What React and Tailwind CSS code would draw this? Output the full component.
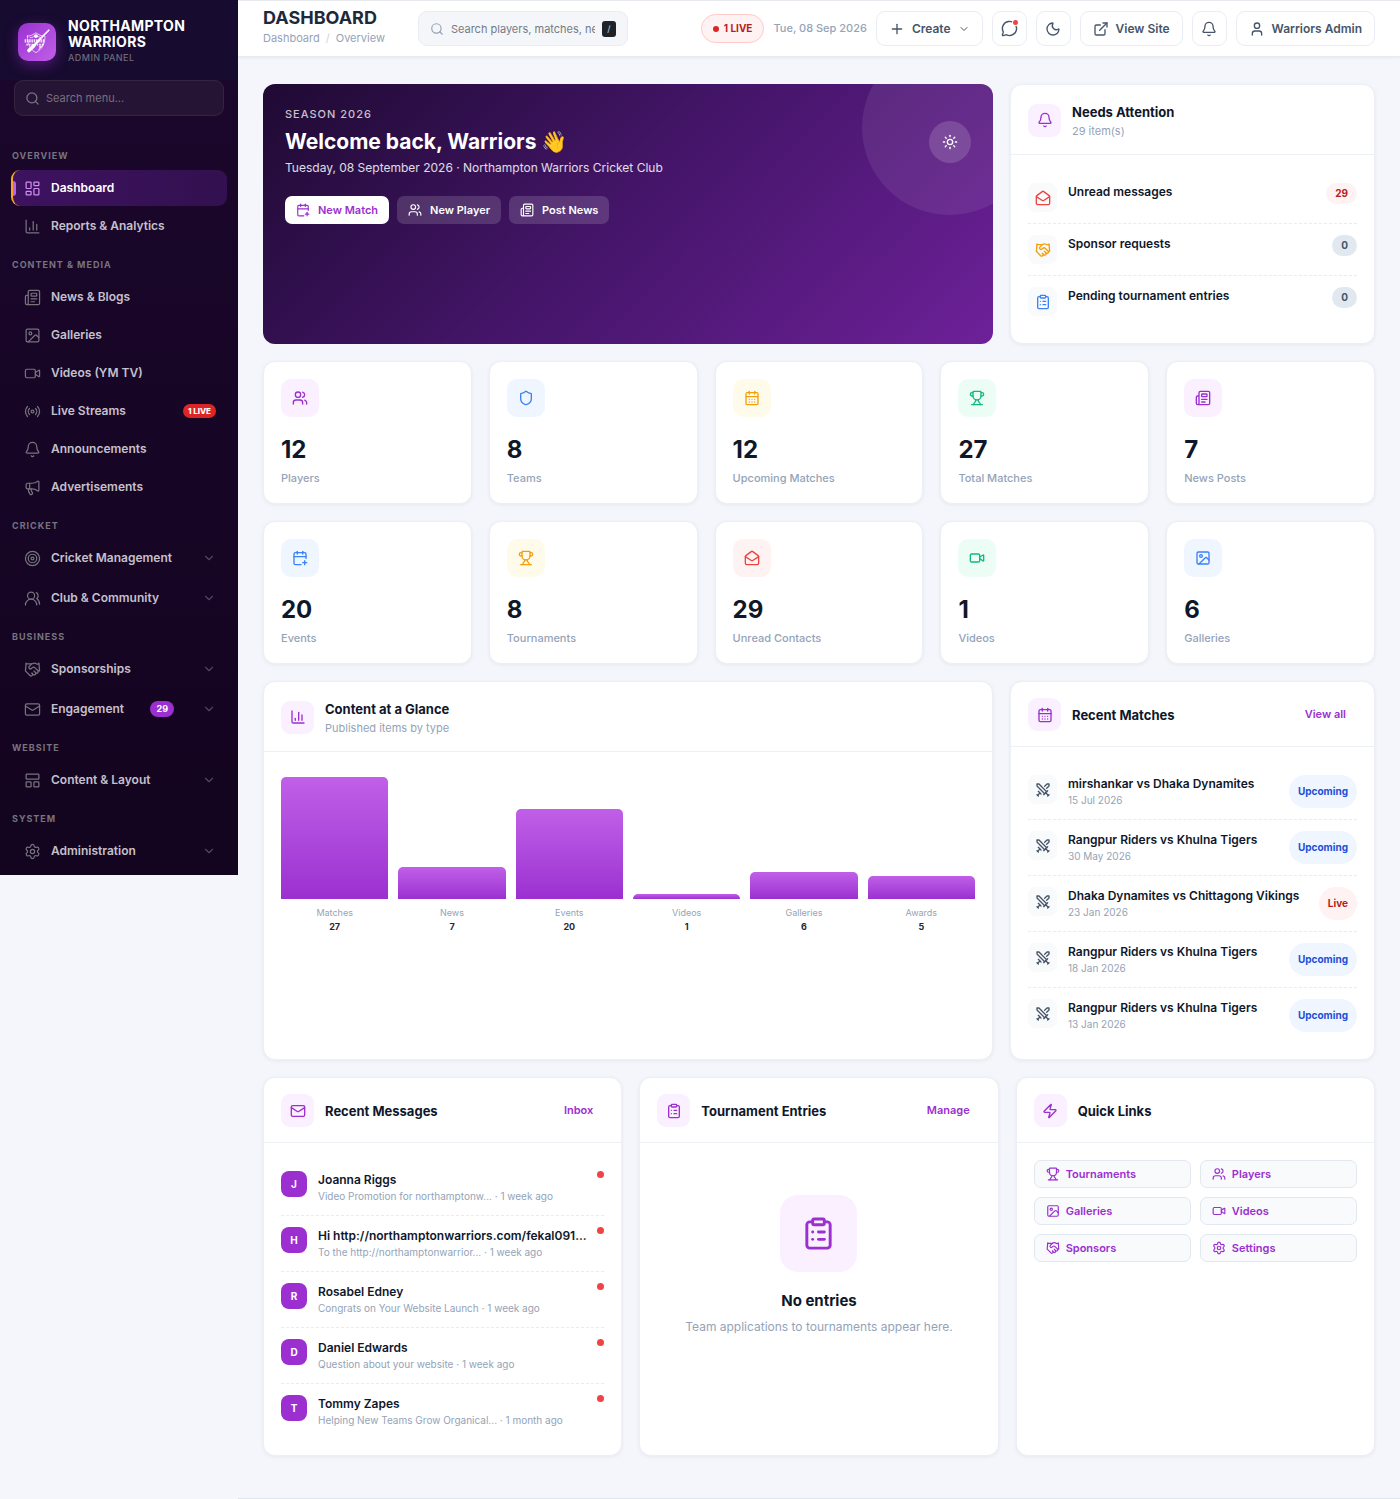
import {
  Bell,
  CalendarDays,
  CalendarPlus,
  ChartColumn,
  ChevronDown,
  ClipboardList,
  ExternalLink,
  Handshake,
  Image,
  LayoutDashboard,
  LayoutPanelTop,
  Mail,
  MailOpen,
  Megaphone,
  MessageCircle,
  Moon,
  Newspaper,
  Plus,
  Radio,
  Search,
  Settings,
  Shield,
  Sun,
  Swords,
  Target,
  Trophy,
  User,
  Users,
  UsersRound,
  Video,
  Zap,
} from 'lucide-react'

const menu = [
  {
    title: 'Overview',
    items: [
      { label: 'Dashboard', icon: LayoutDashboard, active: true },
      { label: 'Reports & Analytics', icon: ChartColumn },
    ],
  },
  {
    title: 'Content & Media',
    items: [
      { label: 'News & Blogs', icon: Newspaper },
      { label: 'Galleries', icon: Image },
      { label: 'Videos (YM TV)', icon: Video },
      { label: 'Live Streams', icon: Radio, live: '1 LIVE' },
      { label: 'Announcements', icon: Bell },
      { label: 'Advertisements', icon: Megaphone },
    ],
  },
  {
    title: 'Cricket',
    groups: [
      { label: 'Cricket Management', icon: Target },
      { label: 'Club & Community', icon: UsersRound },
    ],
  },
  {
    title: 'Business',
    groups: [
      { label: 'Sponsorships', icon: Handshake },
      { label: 'Engagement', icon: Mail, count: 29 },
    ],
  },
  { title: 'Website', groups: [{ label: 'Content & Layout', icon: LayoutPanelTop }] },
  { title: 'System', groups: [{ label: 'Administration', icon: Settings }] },
]

const tones = {
  purple: 'bg-[#faf0ff] text-[#9b2fd0]',
  blue: 'bg-[#eff6ff] text-[#3b82f6]',
  amber: 'bg-[#fffbeb] text-[#f59e0b]',
  green: 'bg-[#ecfdf5] text-[#10b981]',
  red: 'bg-[#fef2f2] text-[#ef4444]',
}

const stats = [
  { value: 12, label: 'Players', icon: Users, tone: 'purple' },
  { value: 8, label: 'Teams', icon: Shield, tone: 'blue' },
  { value: 12, label: 'Upcoming Matches', icon: CalendarDays, tone: 'amber' },
  { value: 27, label: 'Total Matches', icon: Trophy, tone: 'green' },
  { value: 7, label: 'News Posts', icon: Newspaper, tone: 'purple' },
  { value: 20, label: 'Events', icon: CalendarPlus, tone: 'blue' },
  { value: 8, label: 'Tournaments', icon: Trophy, tone: 'amber' },
  { value: 29, label: 'Unread Contacts', icon: MailOpen, tone: 'red' },
  { value: 1, label: 'Videos', icon: Video, tone: 'green' },
  { value: 6, label: 'Galleries', icon: Image, tone: 'blue' },
]

const attention = [
  { label: 'Unread messages', count: 29, icon: MailOpen, color: 'text-[#ef4444]', badge: 'bg-[#fef2f2] text-[#b91c1c]' },
  { label: 'Sponsor requests', count: 0, icon: Handshake, color: 'text-[#f59e0b]', badge: 'bg-[#e2e8f0] text-[#475569]' },
  { label: 'Pending tournament entries', count: 0, icon: ClipboardList, color: 'text-[#3b82f6]', badge: 'bg-[#e2e8f0] text-[#475569]' },
]

const published = [
  { label: 'Matches', value: 27 },
  { label: 'News', value: 7 },
  { label: 'Events', value: 20 },
  { label: 'Videos', value: 1 },
  { label: 'Galleries', value: 6 },
  { label: 'Awards', value: 5 },
]

const matches = [
  { title: 'mirshankar vs Dhaka Dynamites', date: '15 Jul 2026', status: 'Upcoming' },
  { title: 'Rangpur Riders vs Khulna Tigers', date: '30 May 2026', status: 'Upcoming' },
  { title: 'Dhaka Dynamites vs Chittagong Vikings', date: '23 Jan 2026', status: 'Live' },
  { title: 'Rangpur Riders vs Khulna Tigers', date: '18 Jan 2026', status: 'Upcoming' },
  { title: 'Rangpur Riders vs Khulna Tigers', date: '13 Jan 2026', status: 'Upcoming' },
]

const messages = [
  { name: 'Joanna Riggs', text: 'Video Promotion for northamptonw... · 1 week ago' },
  { name: 'Hi http://northamptonwarriors.com/fekal091...', text: 'To the http://northamptonwarrior... · 1 week ago' },
  { name: 'Rosabel Edney', text: 'Congrats on Your Website Launch · 1 week ago' },
  { name: 'Daniel Edwards', text: 'Question about your website · 1 week ago' },
  { name: 'Tommy Zapes', text: 'Helping New Teams Grow Organical... · 1 month ago' },
]

const quickLinks = [
  { label: 'Tournaments', icon: Trophy },
  { label: 'Players', icon: Users },
  { label: 'Galleries', icon: Image },
  { label: 'Videos', icon: Video },
  { label: 'Sponsors', icon: Handshake },
  { label: 'Settings', icon: Settings },
]

function ClubLogo() {
  return (
    <svg viewBox="0 0 28 28" className="h-[30px] w-[30px]" fill="none" stroke="white" strokeLinecap="round" strokeLinejoin="round">
      <path d="M5 8.5c3 0 5.5-1.2 8-3.2 2.5 2 5 3.2 8.5 3.2-.2 7.5-2.5 12-8.5 15.5C7.5 21 5.2 16 5 8.5Z" strokeWidth="0.8" opacity="0.8" />
      <path d="M7.5 10c2.2-.2 4-1 5.7-2.2 1.8 1.2 3.5 2 5.8 2.2" strokeWidth="0.9" opacity="0.8" />
      <circle cx="13" cy="8.5" r="1.8" fill="white" stroke="none" />
      <path d="M2.5 13h19" strokeWidth="3" strokeDasharray="1.4 0.7" strokeLinecap="butt" opacity="0.85" />
      <path d="M4 16.5h16" strokeWidth="1.6" strokeDasharray="1.6 0.8" strokeLinecap="butt" opacity="0.8" />
      <path d="M15.5 21c2.2-1.7 3.7-3.7 4.5-6" strokeWidth="0.9" opacity="0.8" />
      <path d="M25 3 17 11" strokeWidth="1.5" />
      <path d="M17 11 11.5 17" strokeWidth="2" />
      <path d="m11 17.5-4.5 4.5" strokeWidth="3.4" />
      <circle cx="17" cy="18.5" r="1.3" fill="white" stroke="none" opacity="0.7" />
    </svg>
  )
}

function MenuItem({ item }) {
  const Icon = item.icon
  return (
    <a
      href="#"
      className={
        item.active
          ? 'relative flex h-9 items-center gap-[10px] rounded-[9px] border-l-2 border-[#f5a623] bg-linear-to-r from-[#3d1260] to-[#33104f] pr-[11px] pl-[11px] text-white'
          : 'flex h-9 items-center gap-[10px] rounded-[9px] pr-[11px] pl-[13px] text-[#c5c0cc]'
      }
    >
      {item.active && <span className="absolute top-[11px] left-0 h-[15px] w-[3px] rounded-r-[3px] bg-[#c05fe8]" />}
      <Icon size={17} strokeWidth={1.75} className={item.active ? 'text-[#cf8df0]' : 'text-[#77737f]'} />
      <span className="text-xs font-semibold">{item.label}</span>
      {item.live && (
        <span className="ml-auto rounded-full bg-[#dc2626] px-[5px] text-[8px] leading-[14px] font-extrabold text-white">{item.live}</span>
      )}
    </a>
  )
}

function MenuGroup({ item }) {
  const Icon = item.icon
  return (
    <button type="button" className="flex h-9 w-full items-center gap-[10px] rounded-[9px] pr-[11px] pl-[13px] text-[#c5c0cc]">
      <Icon size={17} strokeWidth={1.75} className="text-[#77737f]" />
      <span className="text-xs font-semibold">{item.label}</span>
      {item.count && (
        <span className="ml-auto rounded-full bg-[#9b2fd0] px-[6px] text-[9px] leading-4 font-bold text-white">{item.count}</span>
      )}
      <ChevronDown size={14} className={item.count ? 'ml-[18px] text-[#4f495a]' : 'ml-auto text-[#4f495a]'} />
    </button>
  )
}

function Sidebar() {
  return (
    <aside className="w-[238px] shrink-0 self-start bg-linear-to-b from-[#1b072c] to-[#13041f] pb-[6px]">
      <div className="flex h-20 items-center gap-3 bg-[#170b2f] pt-1 pl-[18px]">
        <div className="flex h-[38px] w-[38px] items-center justify-center rounded-[10px] bg-linear-to-br from-[#9b2fd0] to-[#c05fe8] shadow-[0_4px_14px_rgba(155,47,208,0.45)]">
          <ClubLogo />
        </div>
        <div className="pb-[2px]">
          <div className="text-sm leading-4 font-bold tracking-wide text-white">
            NORTHAMPTON
            <br />
            WARRIORS
          </div>
          <div className="mt-[2px] text-[9px] leading-3 font-medium tracking-wider text-[#6f6a7c]">ADMIN PANEL</div>
        </div>
      </div>

      <div className="mx-[14px] flex h-9 items-center gap-[6px] rounded-[9px] border border-[#34243f] bg-[#261435] pl-[10px]">
        <Search size={15} className="shrink-0 text-[#7c7685]" />
        <input
          type="text"
          aria-label="Search menu"
          placeholder="Search menu..."
          className="h-full min-w-0 flex-1 bg-transparent text-[11px] text-white outline-none placeholder:text-[#77717f]"
        />
      </div>

      <nav className="mt-[19px] px-[11px]">
        {menu.map((section) => (
          <div key={section.title}>
            <h2 className="pt-[15px] pb-2 pl-px text-[9px] leading-3 font-bold tracking-[1px] text-[#77737f] uppercase">{section.title}</h2>
            {section.items && (
              <div className="flex flex-col gap-[2px]">
                {section.items.map((item) => (
                  <MenuItem key={item.label} item={item} />
                ))}
              </div>
            )}
            {section.groups && (
              <div className="flex flex-col gap-1">
                {section.groups.map((item) => (
                  <MenuGroup key={item.label} item={item} />
                ))}
              </div>
            )}
          </div>
        ))}
      </nav>
    </aside>
  )
}

function TopBar() {
  const button = 'flex h-[35px] items-center rounded-[9px] border border-[#e9edf3] bg-white text-xs font-semibold text-[#475569]'
  return (
    <header className="flex h-[57px] items-center border-t border-b border-t-[#e8e9ee] border-b-[#e8ebf1] bg-white px-[25px] shadow-[0_1px_3px_rgba(15,23,42,0.06)]">
      <div className="pb-[2px]">
        <h1 className="text-lg leading-5 font-bold text-[#1e293b]">DASHBOARD</h1>
        <nav className="flex gap-[6px] text-[11px] leading-5 text-[#94a3b8]">
          <a href="#">Dashboard</a>
          <span className="text-[#cbd5e1]">/</span>
          <span>Overview</span>
        </nav>
      </div>
      <div className="ml-[33px] flex h-[35px] w-[210px] items-center gap-[7px] rounded-[9px] border border-[#e9edf3] bg-[#f4f6f9] px-[11px]">
        <Search size={14} className="shrink-0 text-[#94a3b8]" />
        <input
          type="text"
          aria-label="Search players, matches, news"
          placeholder="Search players, matches, news"
          className="h-full min-w-0 flex-1 bg-transparent text-[11px] text-[#1e293b] outline-none placeholder:text-[#757b85]"
        />
        <kbd className="h-4 w-[14px] rounded-[3px] bg-[#1e2329] text-center font-[Inter] text-[9px] leading-4 text-[#cbd5e1]">/</kbd>
      </div>

      <div className="ml-auto flex items-center gap-[9px]">
        <a href="#" className="flex h-[29px] items-center gap-[5px] rounded-full border border-[#fecaca] bg-[#fef2f2] px-[11px] text-[10px] font-bold text-[#b91c1c]">
          <span className="h-[6px] w-[6px] rounded-full bg-[#dc2626]" />1 LIVE
        </a>
        <span className="text-[11px] font-medium text-[#94a3b8]">Tue, 08 Sep 2026</span>
        <button type="button" className={`${button} gap-[7px] px-3`}>
          <Plus size={16} />
          Create
          <ChevronDown size={12} />
        </button>
        <button type="button" aria-label="Messages" className={`${button} relative w-[35px] justify-center`}>
          <MessageCircle size={17} />
          <span className="absolute top-[8px] right-[8px] h-[5px] w-[5px] rounded-full bg-[#ef4444] ring-1 ring-white" />
        </button>
        <button type="button" aria-label="Dark mode" className={`${button} w-[35px] justify-center`}>
          <Moon size={16} />
        </button>
        <a href="#" className={`${button} gap-[7px] px-3`}>
          <ExternalLink size={16} />
          View Site
        </a>
        <button type="button" aria-label="Notifications" className={`${button} w-[35px] justify-center`}>
          <Bell size={16} />
        </button>
        <button type="button" className={`${button} gap-[7px] px-3`}>
          <User size={16} />
          Warriors Admin
        </button>
      </div>
    </header>
  )
}

function Hero() {
  const action = 'flex h-7 items-center gap-2 rounded-[7px] px-[11px] text-[11px] font-semibold'
  return (
    <section className="relative overflow-hidden rounded-xl bg-linear-135 from-[#1f0a33] via-[#45156a] to-[#6e2199] px-[22px] pt-[22px]">
      <div className="absolute -top-11 -right-11 h-[175px] w-[175px] rounded-full bg-white/8" />
      <div className="relative flex justify-between">
        <div>
          <p className="text-[11px] leading-4 font-medium tracking-[1px] text-white/75">SEASON 2026</p>
          <h2 className="mt-[6px] text-[21px] leading-7 font-bold text-white">Welcome back, Warriors 👋</h2>
          <p className="mt-[3px] text-xs leading-[18px] text-white/85">Tuesday, 08 September 2026 · Northampton Warriors Cricket Club</p>
        </div>
        <div className="mt-[15px] flex h-[42px] w-[42px] items-center justify-center rounded-full bg-white/15 text-white">
          <Sun size={16} />
        </div>
      </div>
      <div className="relative mt-[19px] flex gap-2">
        <button type="button" className={`${action} bg-white text-[#9b2fd0]`}>
          <CalendarPlus size={14} />
          New Match
        </button>
        <button type="button" className={`${action} bg-white/15 text-white`}>
          <Users size={14} />
          New Player
        </button>
        <button type="button" className={`${action} bg-white/15 text-white`}>
          <Newspaper size={14} />
          Post News
        </button>
      </div>
    </section>
  )
}

function Card({ title, subtitle, icon: Icon, action, children }) {
  return (
    <section className="rounded-xl border border-[#eceff5] bg-white shadow-[0_1px_4px_rgba(15,23,42,0.06)]">
      <div className="flex items-center gap-[11px] border-b border-[#edf0f5] px-[17px] pt-4 pb-[15px]">
        <div className={`flex h-[33px] w-[33px] shrink-0 items-center justify-center rounded-[9px] ${tones.purple}`}>
          <Icon size={16} />
        </div>
        <div>
          <h3 className="text-[13px] leading-[22px] font-bold text-[#0f172a]">{title}</h3>
          {subtitle && <p className="text-[11px] leading-4 text-[#94a3b8]">{subtitle}</p>}
        </div>
        {action && (
          <a href="#" className="ml-auto px-[11px] text-[11px] font-semibold text-[#9b2fd0]">
            {action}
          </a>
        )}
      </div>
      <div className="px-[17px] pt-[17px] pb-4">{children}</div>
    </section>
  )
}

function StatCard({ stat }) {
  const Icon = stat.icon
  return (
    <a href="#" className="block rounded-xl border border-[#eceff5] bg-white p-[17px] shadow-[0_1px_4px_rgba(15,23,42,0.06)]">
      <div className={`flex h-[38px] w-[38px] items-center justify-center rounded-[10px] ${tones[stat.tone]}`}>
        <Icon size={16} />
      </div>
      <div className="mt-[18px] text-2xl leading-[30px] font-bold text-[#0f172a]">{stat.value}</div>
      <div className="mt-[5px] text-[11px] leading-4 font-medium text-[#94a3b8]">{stat.label}</div>
    </a>
  )
}

const row = 'flex gap-[11px] border-b border-dashed border-[#e8ebf1] py-[11px] last:border-b-0'

function PublishedChart() {
  const max = Math.max(...published.map((p) => p.value))
  return (
    <div className="mt-2 grid grid-cols-6 gap-[10px]">
      {published.map((p) => (
        <div key={p.label} className="text-center">
          <div className="flex h-[122px] items-end">
            <div
              className="w-full rounded-t-[5px] bg-linear-to-b from-[#c05fe8] to-[#9b2fd0]"
              style={{ height: `${(p.value / max) * 100}%` }}
            />
          </div>
          <div className="mt-[7px] text-[9px] leading-[14px] text-[#94a3b8]">{p.label}</div>
          <div className="text-[9px] leading-[14px] font-bold text-[#1e293b]">{p.value}</div>
        </div>
      ))}
    </div>
  )
}

export default function App() {
  return (
    <div className="flex bg-[#f5f6fb] font-[Inter,sans-serif]">
      <Sidebar />
      <div className="min-w-0 flex-1">
        <TopBar />
        <main className="flex flex-col gap-[17px] px-[25px] pt-[27px] pb-[42px]">
          <div className="grid grid-cols-[2fr_1fr] gap-[17px]">
            <Hero />
            <Card title="Needs Attention" subtitle="29 item(s)" icon={Bell}>
              {attention.map((item) => {
                const Icon = item.icon
                return (
                  <div key={item.label} className={row}>
                    <div className={`flex h-[29px] w-[29px] items-center justify-center rounded-lg bg-[#f8fafc] ${item.color}`}>
                      <Icon size={16} />
                    </div>
                    <a href="#" className="text-xs leading-[18px] font-semibold text-[#0f172a]">
                      {item.label}
                    </a>
                    <span className={`ml-auto self-start rounded-full px-[9px] text-[10px] leading-[21px] font-bold ${item.badge}`}>{item.count}</span>
                  </div>
                )
              })}
            </Card>
          </div>

          <div className="grid grid-cols-5 gap-[17px]">
            {stats.map((stat) => (
              <StatCard key={stat.label} stat={stat} />
            ))}
          </div>

          <div className="grid grid-cols-[2fr_1fr] gap-[17px]">
            <Card title="Content at a Glance" subtitle="Published items by type" icon={ChartColumn}>
              <PublishedChart />
            </Card>
            <Card title="Recent Matches" icon={CalendarDays} action="View all">
              {matches.map((match) => (
                <div key={match.date} className={row}>
                  <div className="flex h-[29px] w-[29px] items-center justify-center rounded-lg bg-[#f8fafc] text-[#475569]">
                    <Swords size={16} />
                  </div>
                  <div>
                    <a href="#" className="block text-xs leading-[18px] font-semibold text-[#0f172a]">
                      {match.title}
                    </a>
                    <p className="text-[10px] leading-[15px] text-[#94a3b8]">{match.date}</p>
                  </div>
                  <span
                    className={
                      match.status === 'Live'
                        ? 'ml-auto flex items-center rounded-full bg-[#fef2f2] px-[9px] text-[10px] font-bold text-[#b91c1c]'
                        : 'ml-auto flex items-center rounded-full bg-[#eff6ff] px-[9px] text-[10px] font-bold text-[#1d4ed8]'
                    }
                  >
                    {match.status}
                  </span>
                </div>
              ))}
            </Card>
          </div>

          <div className="grid grid-cols-3 gap-[17px]">
            <Card title="Recent Messages" icon={Mail} action="Inbox">
              {messages.map((message) => (
                <div key={message.name} className={row}>
                  <div className="flex h-[26px] w-[26px] shrink-0 items-center justify-center rounded-lg bg-[#9b2fd0] text-[10px] font-bold text-white">
                    {message.name[0]}
                  </div>
                  <div className="min-w-0 flex-1 whitespace-nowrap">
                    <a href="#" className="block text-xs leading-[18px] font-semibold text-[#0f172a]">
                      {message.name}
                    </a>
                    <p className="text-[10px] leading-[15px] text-[#94a3b8]">{message.text}</p>
                  </div>
                  <span className="h-[7px] w-[7px] shrink-0 rounded-full bg-[#ef4444]" />
                </div>
              ))}
            </Card>
            <Card title="Tournament Entries" icon={ClipboardList} action="Manage">
              <div className="flex flex-col items-center pt-[35px]">
                <div className={`flex h-[77px] w-[77px] items-center justify-center rounded-[18px] ${tones.purple}`}>
                  <ClipboardList size={35} />
                </div>
                <h4 className="mt-[18px] text-[15px] leading-[22px] font-bold text-[#0f172a]">No entries</h4>
                <p className="mt-[6px] text-xs leading-[18px] text-[#94a3b8]">Team applications to tournaments appear here.</p>
              </div>
            </Card>
            <Card title="Quick Links" icon={Zap}>
              <div className="grid grid-cols-2 gap-[9px]">
                {quickLinks.map((link) => {
                  const Icon = link.icon
                  return (
                    <a
                      key={link.label}
                      href="#"
                      className="flex h-7 items-center gap-[6px] rounded-[7px] border border-[#e2e8f0] bg-[#f8fafc] px-[11px] text-[11px] font-semibold text-[#9b2fd0]"
                    >
                      <Icon size={14} />
                      {link.label}
                    </a>
                  )
                })}
              </div>
            </Card>
          </div>
        </main>
        <footer className="border-t border-[#e2e5ec]" />
      </div>
    </div>
  )
}
